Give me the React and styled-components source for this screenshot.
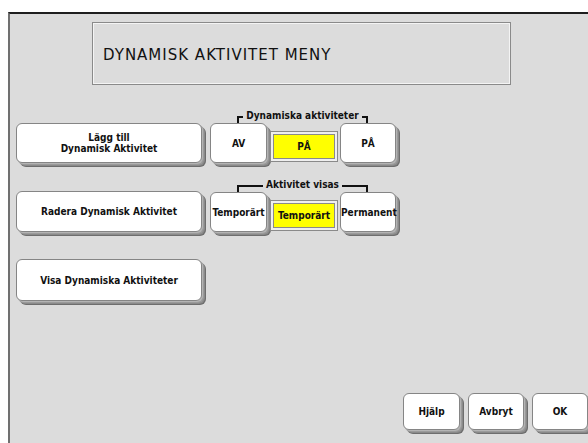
import React from "react";
import styled, { createGlobalStyle } from "styled-components";

const GlobalStyle = createGlobalStyle`
  html, body {
    margin: 0;
    padding: 0;
    background: #ffffff;
  }
  body {
    font-family: "DejaVu Sans", Verdana, sans-serif;
    overflow: hidden;
  }
`;

const Panel = styled.div`
  box-sizing: border-box;
  margin: 12px 0 0 8px;
  height: 431px;
  background: #dcdcdc;
  border-top: 2px solid #1e1e1e;
  border-left: 2px solid #707070;
  display: flex;
  flex-direction: column;
`;

const TitleBox = styled.div`
  box-sizing: border-box;
  margin: 8px 0 0 82px;
  width: 419px;
  height: 63px;
  border: 1px solid #8a8a8a;
  box-shadow: inset 1px 1px 0 #f4f4f4, inset -1px -1px 0 #f4f4f4;
  display: flex;
  align-items: center;
  padding: 2px 0 0 10px;
  font-size: 15px;
  letter-spacing: 1px;
  color: #111;
`;

const Content = styled.div`
  display: flex;
  flex-direction: column;
  padding-left: 6px;
`;

const Row = styled.div`
  display: flex;
  align-items: flex-end;
  gap: 8px;
  margin-top: ${(p) => p.$gap}px;
`;

const Button = styled.button`
  box-sizing: border-box;
  width: ${(p) => p.$w}px;
  height: ${(p) => p.$h}px;
  padding: 0;
  background: #ffffff;
  border: 1px solid #858585;
  border-radius: 6px;
  box-shadow: 1px 1px 0 #b4b4b4, 2px 2px 0 #9a9a9a, 3px 3px 0 #8a8a8a, 4px 4px 0 #6e6e6e;
  font-family: "DejaVu Sans Condensed", "DejaVu Sans", Verdana, sans-serif;
  font-weight: bold;
  font-size: 10px;
  line-height: 11px;
  color: #111;
  white-space: pre-line;
  flex-shrink: 0;
`;

const Group = styled.div`
  display: flex;
  flex-direction: column;
`;

const Bracket = styled.div`
  display: flex;
  align-items: flex-start;
  height: 9px;
  margin: 0 28px 0 27px;
  font-family: "DejaVu Sans Condensed", "DejaVu Sans", Verdana, sans-serif;
  font-weight: bold;
  font-size: 10px;
  line-height: 9px;
  color: #111;
`;

const Corner = styled.span`
  flex: 1;
  height: 5px;
  margin-top: 2px;
  border-top: 2px solid #111;
  ${(p) => (p.$side === "left" ? "border-left: 2px solid #111;" : "border-right: 2px solid #111;")}
`;

const BracketText = styled.span`
  padding: 0 3px;
  margin-top: -3px;
  white-space: nowrap;
`;

const Toggles = styled.div`
  display: flex;
  align-items: flex-end;
  gap: 2px;
`;

const Selected = styled.div`
  box-sizing: border-box;
  width: 68px;
  height: 31px;
  margin: 0 0 1px 1px;
  border: 1px solid #8a8a8a;
  padding: 2px;
  background: #efefef;
  flex-shrink: 0;
`;

const SelectedInner = styled.div`
  box-sizing: border-box;
  height: 100%;
  border: 1px solid #8a8a8a;
  background: #ffff00;
  display: flex;
  align-items: center;
  justify-content: center;
  font-family: "DejaVu Sans Condensed", "DejaVu Sans", Verdana, sans-serif;
  font-weight: bold;
  font-size: 10px;
  color: #111;
`;

const Footer = styled.div`
  margin-top: auto;
  display: flex;
  justify-content: flex-end;
  gap: 8px;
  padding-bottom: 13px;
`;

function ToggleGroup({ label, options, selected }) {
  return (
    <Group>
      <Bracket>
        <Corner $side="left" />
        <BracketText>{label}</BracketText>
        <Corner $side="right" />
      </Bracket>
      <Toggles>
        <Button $w={57} $h={40}>{options[0]}</Button>
        <Selected>
          <SelectedInner>{selected}</SelectedInner>
        </Selected>
        <Button $w={56} $h={40}>{options[1]}</Button>
      </Toggles>
    </Group>
  );
}

export default function App() {
  return (
    <>
      <GlobalStyle />
      <Panel>
        <TitleBox>DYNAMISK AKTIVITET MENY</TitleBox>
        <Content>
          <Row $gap={29}>
            <Button $w={186} $h={40}>{"Lägg till\nDynamisk Aktivitet"}</Button>
            <ToggleGroup label="Dynamiska aktiviteter" options={["AV", "PÅ"]} selected="PÅ" />
          </Row>
          <Row $gap={20}>
            <Button $w={186} $h={41}>Radera Dynamisk Aktivitet</Button>
            <ToggleGroup
              label="Aktivitet visas"
              options={["Temporärt", "Permanent"]}
              selected="Temporärt"
            />
          </Row>
          <Row $gap={27}>
            <Button $w={186} $h={42}>Visa Dynamiska Aktiviteter</Button>
          </Row>
        </Content>
        <Footer>
          <Button $w={57} $h={37}>Hjälp</Button>
          <Button $w={56} $h={37}>Avbryt</Button>
          <Button $w={56} $h={37}>OK</Button>
        </Footer>
      </Panel>
    </>
  );
}
